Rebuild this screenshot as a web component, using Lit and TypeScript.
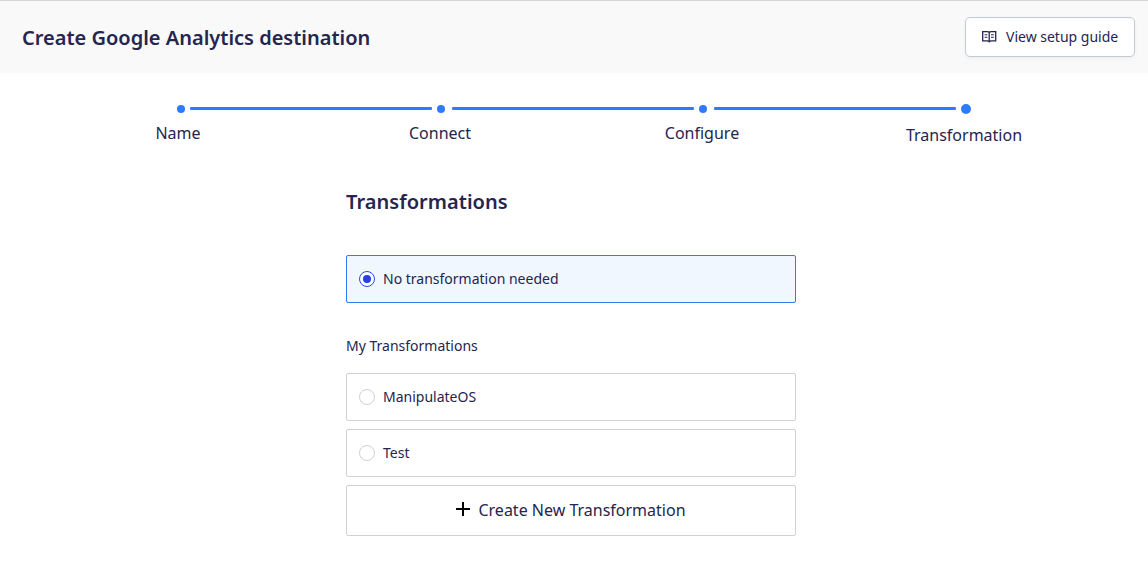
import { LitElement, html, css } from "lit";
import { customElement, state } from "lit/decorators.js";

@customElement("app-root")
class AppRoot extends LitElement {
  @state() selected = "none";

  static styles = css`
    :host { display: block; height: 561px; overflow: hidden; background: #fff; color: #25254e; font: 14px/22px "Noto Sans", sans-serif; }
    * { box-sizing: border-box; }
    header { height: 73px; border-top: 1px solid #d5d5d5; background: #f9f9f9; padding: 0 13px 0 22px; display: flex; align-items: center; justify-content: space-between; }
    h1, h2 { margin: 0; font-size: 20px; line-height: 28px; font-weight: 600; }
    h1 { padding-top: 2px; }
    h2 { letter-spacing: 0.04px; }
    button { font: inherit; color: inherit; background: #fff; }
    .guide { height: 40px; width: 170px; border: 1px solid #c4cad1; border-radius: 5px; padding: 0 0 0 16px; display: flex; align-items: center; gap: 8px; box-shadow: 0 2px 4px rgba(0, 0, 0, 0.04); }
    .steps { display: flex; padding: 31px 0 0 177px; height: 88px; }
    .step { width: 262px; flex: none; }
    .track { display: flex; align-items: center; height: 10px; }
    .dot { width: 8px; height: 8px; border-radius: 50%; background: #2f7bff; flex: none; }
    .step + .step .dot { margin-left: -2px; }
    .last .dot { width: 10px; height: 10px; }
    .line { height: 3px; border-radius: 1px; background: #2f7bff; flex: none; width: 242px; margin: 0 0 1px 5px; }
    .step + .step .line { margin-left: 7px; }
    .label { font-size: 16px; line-height: 24px; width: 130px; margin: 7px 0 0 -64px; text-align: center; }
    .last .label { margin-top: 9px; }
    main { width: 450px; margin: 27px 0 0 346px; }
    .opt { height: 48px; border: 1px solid #d1d1d1; border-radius: 2px; padding: 0 12px; display: flex; align-items: center; gap: 8px; margin-bottom: 8px; }
    .opt.on { border-color: #2f7bf6; background: #f0f7ff; }
    .radio { width: 16px; height: 16px; border: 1px solid #d1d1d1; border-radius: 50%; background: #fff; display: grid; place-items: center; }
    .on .radio { border-color: #2a4be0; }
    .on .radio::after { content: ""; width: 8px; height: 8px; border-radius: 50%; background: #2a3fe0; }
    .first { margin-top: 39px; }
    .sub { margin: 32px 0 16px; }
    .create { width: 100%; height: 51px; border: 1px solid #d1d1d1; border-radius: 2px; font-size: 16px; padding: 0 1px 1px 0; display: flex; align-items: center; justify-content: center; gap: 8px; }
    .create svg { margin: 0 -1px 2px 0; }
  `;

  option(id: string, name: string, cls = "") {
    return html`<div class="opt ${cls} ${this.selected === id ? "on" : ""}" @click=${() => (this.selected = id)}><span class="radio"></span>${name}</div>`;
  }

  render() {
    const steps = ["Name", "Connect", "Configure", "Transformation"];
    return html`
      <header><h1>Create Google Analytics destination</h1>
        <button class="guide"><svg width="16" height="14" viewBox="0 0 16 14" fill="none" stroke="#25254e"><path stroke-width="1.3" d="M.7 1.700H5.200Q6.600 1.700 7.200 2.300Q7.800 1.700 9.200 1.700h4.500v9.200H9.200Q7.800 10.900 7.200 11.700Q6.600 10.900 5.200 10.900H.7zM7.200 2.300v10"/><path stroke-width="1" d="M2.600 4.800H5.400M2.600 7.300H5.400M9 4.800h2.800M9 7.300h2.800"/></svg>View setup guide</button>
      </header>
      <div class="steps">${steps.map((s, i) => html`<div class="step ${i === 3 ? "last" : ""}"><div class="track"><span class="dot"></span>${i < 3 ? html`<span class="line"></span>` : ""}</div><div class="label">${s}</div></div>`)}</div>
      <main><h2>Transformations</h2>
        ${this.option("none", "No transformation needed", "first")}
        <div class="sub">My Transformations</div>
        ${this.option("os", "ManipulateOS")}${this.option("test", "Test")}
        <button class="create"><svg width="16" height="16" viewBox="0 0 16 16" stroke="#000" stroke-width="2"><path d="M8 1v14M1 8h14"/></svg>Create New Transformation</button>
      </main>`;
  }
}
